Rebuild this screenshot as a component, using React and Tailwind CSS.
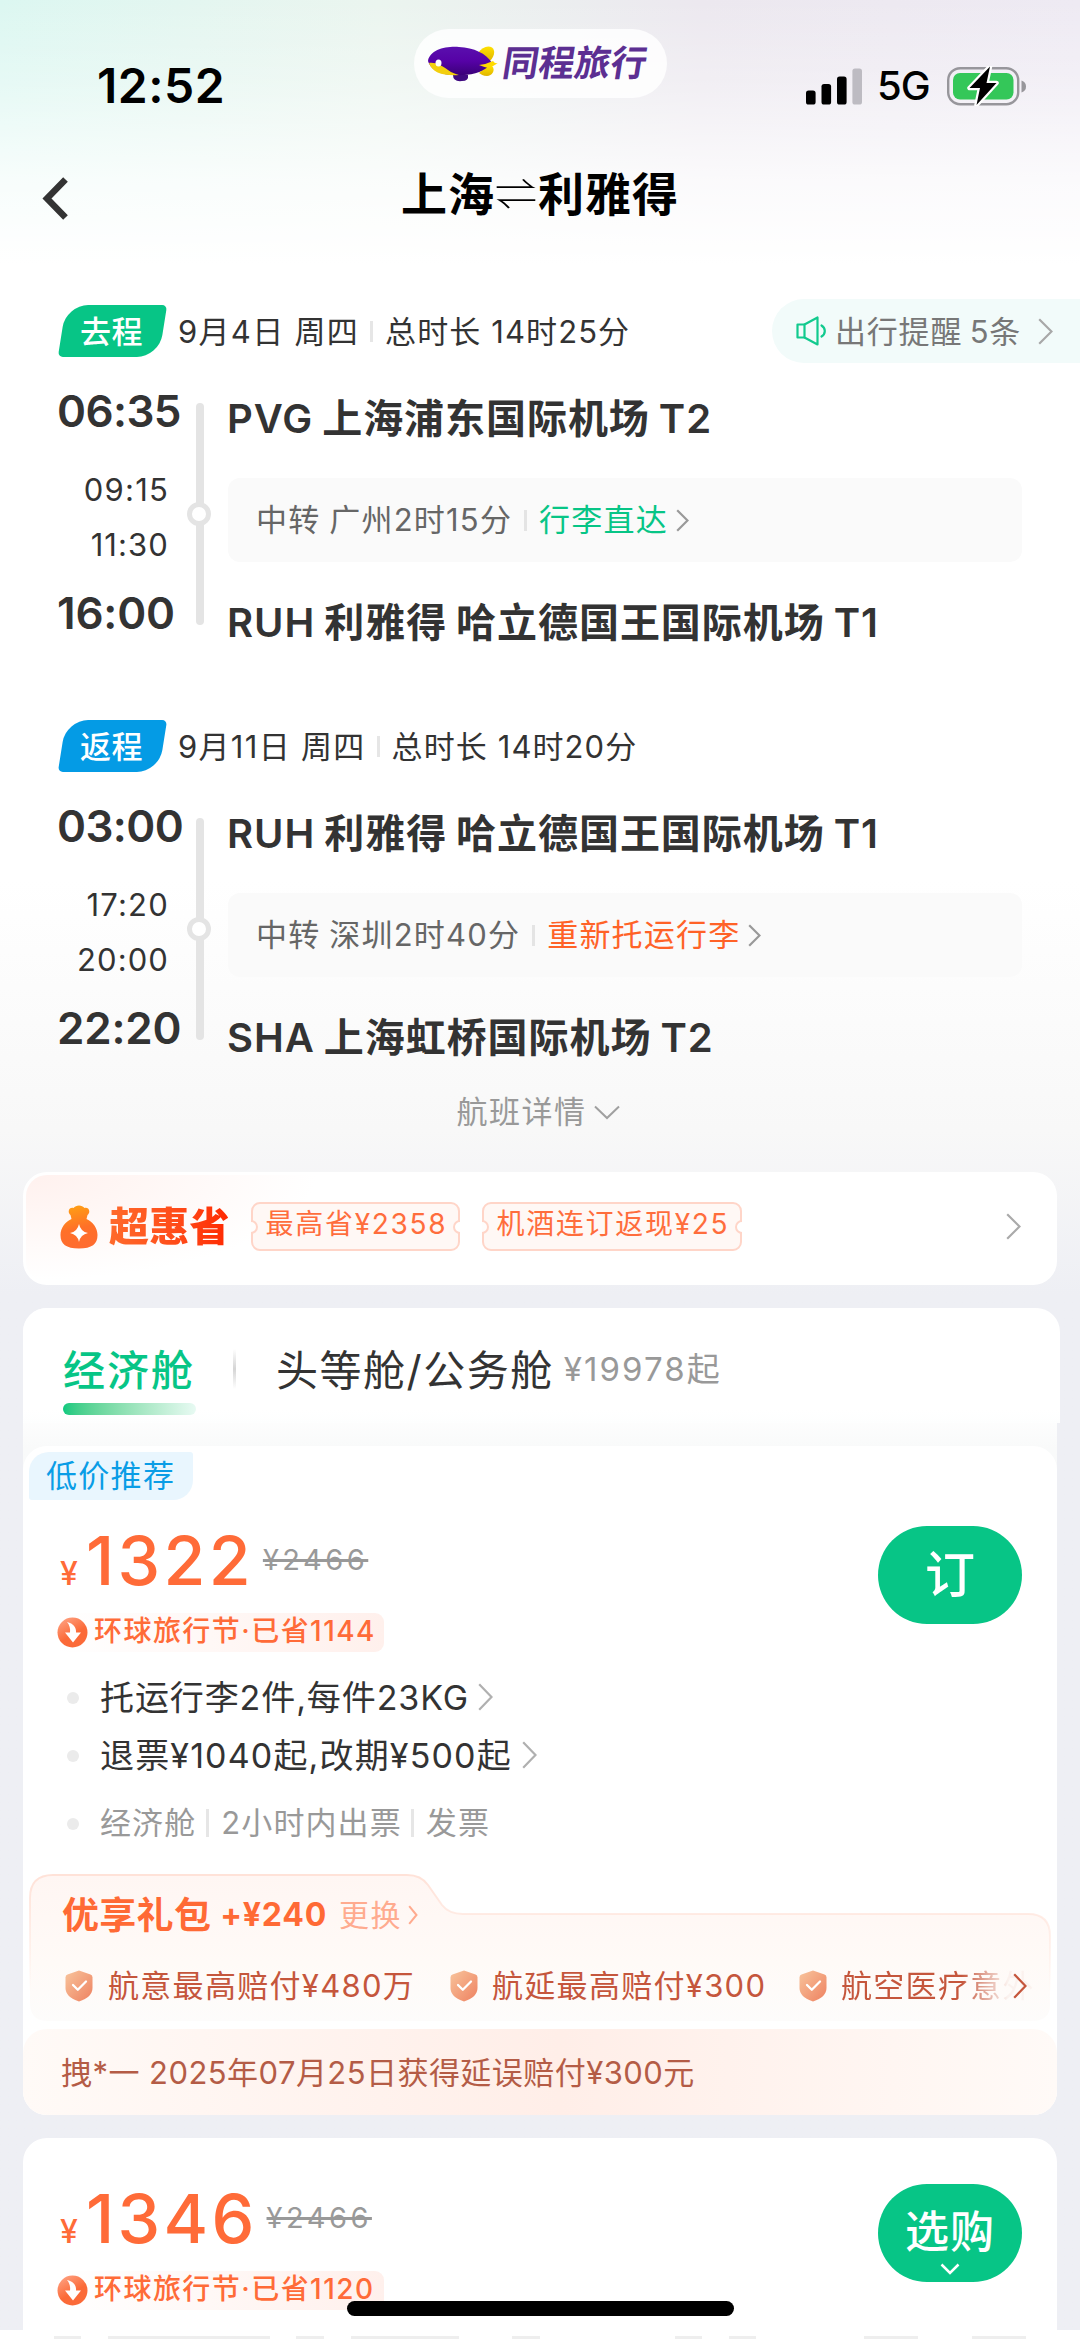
import React from "react";

const LEGS = [
  {
    tag: "去程",
    tagClass: "bg-[#07c586]",
    date: "9月4日 周四",
    total: "总时长 14时25分",
    times: ["06:35", "09:15", "11:30", "16:00"],
    from: "PVG 上海浦东国际机场 T2",
    to: "RUH 利雅得 哈立德国王国际机场 T1",
    stop: "中转 广州2时15分",
    baggage: "行李直达",
    baggageClass: "text-[#07c586]",
    reminder: "出行提醒 5条",
  },
  {
    tag: "返程",
    tagClass: "bg-[#049be5]",
    date: "9月11日 周四",
    total: "总时长 14时20分",
    times: ["03:00", "17:20", "20:00", "22:20"],
    from: "RUH 利雅得 哈立德国王国际机场 T1",
    to: "SHA 上海虹桥国际机场 T2",
    stop: "中转 深圳2时40分",
    baggage: "重新托运行李",
    baggageClass: "text-[#ff6227]",
  },
];

function Chevron({ className, strokeWidth = 2.2, w = 14, h = 26 }) {
  return (
    <svg width={w} height={h} viewBox={`0 0 ${w} ${h}`} fill="none" className={`shrink-0 ${className}`}>
      <path d={`M1.2 1.2 L${w - 1.5} ${h / 2} L1.2 ${h - 1.2}`} stroke="currentColor" strokeWidth={strokeWidth} />
    </svg>
  );
}

function Blimp() {
  return (
    <svg width="70" height="36" viewBox="0 0 70 36" className="shrink-0">
      <defs>
        <linearGradient id="hull" x1="0" y1="0" x2="0" y2="1">
          <stop offset="0" stopColor="#5a0fae" />
          <stop offset="0.5" stopColor="#5602a6" />
          <stop offset="1" stopColor="#3a0178" />
        </linearGradient>
        <linearGradient id="fin" x1="0" y1="0" x2="0" y2="1">
          <stop offset="0" stopColor="#ffe100" />
          <stop offset="1" stopColor="#e0b400" />
        </linearGradient>
      </defs>
      <path d="M50 7 C54 1 60 -1 64 1.5 C68 5 66 11 62 15 Z" fill="url(#fin)" />
      <path d="M51 27 C55 24 60 19 64 20 C68 24 64 30 59 30 C55 30 53 28 51 27 Z" fill="url(#fin)" />
      <path d="M25 29 Q32 26 40 29 Q41 35 34 35 Q25 36 25 29 Z" fill="#3f0a80" />
      <path d="M0 15 C2 4 17 0 31 1 C46 2 58 7 64 17 C57 25 47 29 34 29 C22 30 4 28 0 15 Z" fill="url(#hull)" />
      <path d="M1 17 C8 16 14 20 20 24 C24 27 28 28 31 29 C16 30 4 27 1 17 Z" fill="#f3cf0d" />
      <path d="M51 19 Q59 18 65 15 Q67 18 70 17 Q66 20 60 22 Q56 21 51 19 Z" fill="#ffd900" />
      <ellipse cx="10.5" cy="17" rx="3" ry="3.6" fill="#fff" />
    </svg>
  );
}

function StatusBar() {
  return (
    <div className="flex h-[150px] items-start pt-[29px]">
      <div className="mt-[27px] w-[317px] shrink-0 pl-[97px] text-[48px] leading-[60px] font-semibold tracking-[0.5px] text-black">
        12:52
      </div>
      <div className="ml-[97px] flex h-[69px] w-[253px] shrink-0 items-center rounded-full bg-white/85 pl-[14px]">
        <Blimp />
        <span className="ml-[5px] -skew-x-[9deg] text-[36px] leading-[69px] font-bold whitespace-nowrap text-[#5c2f92]">同程旅行</span>
      </div>
      <div className="mt-[27px] ml-[139px] flex h-[60px] items-center">
        <svg width="56" height="37" viewBox="0 0 56 37" className="shrink-0">
          <rect x="0" y="22.5" width="9.6" height="14" rx="2.6" />
          <rect x="15.5" y="16" width="9.6" height="20.5" rx="2.6" />
          <rect x="31" y="8.5" width="9.6" height="28" rx="2.6" />
          <rect x="46.4" y="0.5" width="9.6" height="36" rx="2.6" fill="#bdbbc2" />
        </svg>
        <span className="ml-[15px] w-[70px] text-[40px] leading-[60px] font-medium tracking-[-1px] text-black">5G</span>
        <svg width="80" height="40" viewBox="0 0 80 40" className="shrink-0">
          <rect x="1.2" y="2.2" width="70" height="36" rx="12" fill="none" stroke="#97969b" strokeWidth="2.4" />
          <rect x="6" y="7" width="60.5" height="26.5" rx="7" fill="#34c759" />
          <path d="M74.5 14.5 Q79 16 79 20.5 Q79 25 74.5 26.5 Z" fill="#97969b" />
          <path d="M43 0.5 L22.5 22 H33 L29.5 39 L49.5 17 H39.5 Z" fill="#000" stroke="#fff" strokeWidth="4.5" strokeLinejoin="round" paintOrder="stroke" />
        </svg>
      </div>
    </div>
  );
}

function TitleBar() {
  return (
    <div className="flex h-[149px] items-start">
      <svg width="28" height="44" viewBox="0 0 28 44" fill="none" className="mt-[26px] ml-[42px] shrink-0">
        <path d="M23.5 3.5 L5 22.5 L23.5 41.5" stroke="#333" strokeWidth="6.5" />
      </svg>
      <div className="ml-[331px] flex h-[87px] items-center text-[46px] leading-[88px] font-semibold tracking-[1px] text-black">
        <span>上海</span>
        <span className="w-[43px] scale-y-85 text-[42px] font-light tracking-normal">⇌</span>
        <span>利雅得</span>
      </div>
    </div>
  );
}

function Leg({ leg }) {
  const [depart, arriveStop, departStop, arrive] = leg.times;
  return (
    <section className="mb-[35px] h-[380px]">
      <div className="flex h-[64px] items-center pl-[62px] text-[31px] leading-[53px] tracking-[1.1px] text-[#333]">
        <div className={`flex h-[52px] w-[101px] -skew-x-[9deg] items-center justify-center rounded-tl-[22px] rounded-tr-[5px] rounded-br-[22px] rounded-bl-[5px] ${leg.tagClass}`}>
          <span className="skew-x-[9deg] pr-[2px] font-medium tracking-[0.5px] text-white">{leg.tag}</span>
        </div>
        <span className="ml-[15px] tracking-[1.3px]">{leg.date}</span>
        <i className="mr-[12px] ml-[11px] h-[21px] w-[3px] bg-[#e6e6e6]" />
        <span>{leg.total}</span>
        {leg.reminder && (
          <div className="ml-auto flex h-[64px] w-[308px] items-center rounded-l-full bg-[#f2fbfa] pl-[24px] tracking-[0.8px] [word-spacing:-2px] text-[#777]">
            <svg width="30" height="30" viewBox="0 0 30 30" fill="none" stroke="#12ca8e" strokeWidth="2.2" strokeLinejoin="round" strokeLinecap="round" className="shrink-0">
              <path d="M8.5 8.5 L21.5 1.5 V28.5 L8.5 21.5 Z" />
              <path d="M8.5 8.5 H1.5 V21.5 H8.5" />
              <path d="M25.5 9.5 Q28.8 11.5 28.8 15 Q28.8 18.5 25.5 20.5" />
            </svg>
            <span className="ml-[9px] whitespace-nowrap">{leg.reminder}</span>
            <Chevron className="ml-[17px] text-[#a8a8a8]" w={15} h={27} />
          </div>
        )}
      </div>
      <div className="flex h-[316px] items-start text-[#333]">
        <div className="flex w-[187px] shrink-0 flex-col pl-[57px]">
          <span className="mt-[24px] text-[44px] leading-[48px] font-semibold tracking-[-0.6px]">{depart}</span>
          <span className="mt-[37px] pr-[18px] text-right text-[31px] leading-[36px] tracking-[1.2px]">{arriveStop}</span>
          <span className="mt-[19px] pr-[18px] text-right text-[31px] leading-[36px] tracking-[1.1px]">{departStop}</span>
          <span className="mt-[26px] text-[44px] leading-[49px] font-semibold tracking-[-0.2px]">{arrive}</span>
        </div>
        <div className="relative mt-[40px] flex h-[222px] w-[24px] shrink-0 justify-center">
          <i className="ml-px h-full w-[8px] rounded-full bg-[#e4e4e4]" />
          <i className="absolute top-[99px] left-0 size-[24px] rounded-full border-[5px] border-[#e4e4e4] bg-white" />
        </div>
        <div className="ml-[16px] text-[40px] leading-[50px] font-semibold tracking-[0.95px] whitespace-nowrap [word-spacing:-2px]">
          <div className="mt-[31px]">{leg.from}</div>
          <div className="mt-[34px] ml-px flex h-[84px] w-[794px] items-center rounded-[12px] bg-[#fafafa] pl-[28px] text-[31px] font-normal tracking-[1.2px] text-[#666] [word-spacing:-1px]">
            <span>{leg.stop}</span>
            <i className="mx-[12px] h-[21px] w-[3px] bg-[#e4e4e4]" />
            <span className={`tracking-[1.2px] ${leg.baggageClass}`}>{leg.baggage}</span>
            <Chevron className="ml-[8px] text-[#999]" w={13} h={23} />
          </div>
          <div className="mt-[36px]">{leg.to}</div>
        </div>
      </div>
    </section>
  );
}

function Ticket({ children, className }) {
  return (
    <div className={`relative flex h-[49px] items-start justify-center rounded-[9px] border-2 border-[#ffd5c8] bg-[#fff8f5] text-[28px] leading-[41px] tracking-[1.7px] whitespace-nowrap text-[#ff6d3c] ${className}`}>
      <i className="absolute top-[16px] -left-[9px] size-[14px] rounded-full border-2 border-[#ffd5c8] bg-[#fffdfc] [clip-path:inset(0_0_0_7px)]" />
      <span className="pl-[2px]">{children}</span>
      <i className="absolute top-[16px] -right-[9px] size-[14px] rounded-full border-2 border-[#ffd5c8] bg-white [clip-path:inset(0_7px_0_0)]" />
    </div>
  );
}

function SavingsBar() {
  return (
    <div className="mt-[42px] ml-[23px] h-[113px] w-[1034px] rounded-[24px] bg-white p-[3px]">
      <div className="flex h-full items-start rounded-[21px] bg-[radial-gradient(ellipse_290px_105px_at_0_0,#fff1ee,#ffffff)] pt-[27px] pl-[34px]">
        <div className="flex h-[49px] w-full items-center">
          <svg width="38" height="44" viewBox="0 0 38 44" className="shrink-0">
            <defs>
              <linearGradient id="bag" x1="0.3" y1="0" x2="0.5" y2="1">
                <stop offset="0" stopColor="#ffa014" />
                <stop offset="0.55" stopColor="#ff7028" />
                <stop offset="1" stopColor="#ff6c30" />
              </linearGradient>
            </defs>
            <path d="M10.5 10 C7 7 9 2 13.5 3 C16 -0.5 22 -0.5 24.5 3 C29 2 31 7 27.5 10 L26.5 14 C33 17 37.5 23 37.5 30 C37.5 39 32 43.5 19 43.5 C6 43.5 0.5 39 0.5 30 C0.5 23 5 17 11.5 14 Z" fill="url(#bag)" />
            <path d="M19 19 Q20.5 26.5 28 28 Q20.5 29.5 19 37 Q17.5 29.5 10 28 Q17.5 26.5 19 19 Z" fill="#fff" />
          </svg>
          <span className="ml-[11px] bg-linear-to-r from-[#ff6a2b] to-[#ff2600] bg-clip-text text-[40px] leading-[49px] font-black tracking-[0.3px] text-transparent">超惠省</span>
          <Ticket className="ml-[21px] w-[209px]">最高省¥2358</Ticket>
          <Ticket className="ml-[22px] w-[260px]">机酒连订返现¥25</Ticket>
          <Chevron className="mr-[33px] ml-auto text-[#aaa]" w={15} h={27} />
        </div>
      </div>
    </div>
  );
}

function CabinTabs() {
  return (
    <div className="flex h-[115px] w-[1037px] items-start rounded-t-[24px] bg-linear-to-b from-white from-88% to-[#fdfefe] pl-[40px]">
      <div className="w-[133px]">
        <div className="mt-[38px] text-[42px] leading-[50px] font-medium tracking-[2px] whitespace-nowrap text-[#07c586]">经济舱</div>
        <div className="mt-[7px] h-[12px] rounded-full bg-linear-to-r from-[#07c97f] to-[#e8faf3]" />
      </div>
      <i className="mt-[41px] ml-[37px] h-[40px] w-[3px] bg-linear-to-b from-white via-[#d5d5d5] to-white" />
      <div className="mt-[38px] ml-[40px] text-[42px] leading-[50px] tracking-[1.5px] text-[#333]">头等舱/公务舱</div>
      <div className="mt-[36px] ml-[10px] text-[33px] leading-[50px] tracking-[2.1px] text-[#999]">¥19978起</div>
    </div>
  );
}

function PriceHead({ price, original, saved, id, children }) {
  return (
    <div className="flex items-start justify-between pr-[35px] pl-[34px]">
      <div>
        <div className="flex h-[70px] items-center">
          <div className="flex items-baseline font-medium text-[#ff6b38]">
            <span className="w-[29px] pl-[3px] text-[32px] leading-none">¥</span>
            <span className="text-[68px] leading-[69px] tracking-[3.3px]">{price}</span>
          </div>
          <span className="ml-[9px] text-[29px] leading-[70px] tracking-[3.5px] text-[#999] line-through decoration-[#999] decoration-[2.5px]">{original}</span>
        </div>
        <div className="mt-[18px] flex h-[39px] w-[327px] items-center rounded-r-[9px] bg-linear-to-r from-white to-[#fff0ec]">
          <svg width="31" height="31" viewBox="0 0 31 31" className="shrink-0">
            <defs>
              <linearGradient id={id} x1="0" y1="0" x2="0.6" y2="1">
                <stop offset="0" stopColor="#ffa98c" />
                <stop offset="0.65" stopColor="#fb6a38" />
                <stop offset="1" stopColor="#fb6a38" />
              </linearGradient>
            </defs>
            <circle cx="15.5" cy="15.5" r="15" fill={`url(#${id})`} />
            <path d="M10 5 C16.5 6.5 19.5 10.5 19 15.5 H24 L16 25.5 L8 15.5 H13 C13.5 11.5 12.5 8 10 5 Z" fill="#fff" />
          </svg>
          <span className="ml-[6px] h-[39px] text-[28px] leading-[37px] font-medium tracking-[1.45px] whitespace-nowrap text-[#ff6b38]">
            环球旅行节·已省{saved}
          </span>
        </div>
      </div>
      <div className="mt-[1px] flex h-[98px] w-[144px] flex-col items-center rounded-full bg-[#07c586] text-white">
        {children}
      </div>
    </div>
  );
}

function Dot() {
  return <i className="mt-px size-[12px] shrink-0 rounded-full bg-[#ebebeb]" />;
}

function Shield({ id }) {
  return (
    <svg width="28" height="32" viewBox="0 0 28 32" fill="none" className="shrink-0">
      <defs>
        <linearGradient id={id} x1="0" y1="0" x2="1" y2="1">
          <stop offset="0" stopColor="#f8c49c" />
          <stop offset="1" stopColor="#ee8160" />
        </linearGradient>
      </defs>
      <path d="M14 0.5 L25.5 4.5 Q27.5 5.2 27.5 7.5 V18 Q27.5 27 14 31.5 Q0.5 27 0.5 18 V7.5 Q0.5 5.2 2.5 4.5 Z" fill={`url(#${id})`} />
      <path d="M8 15 L12.8 19.8 L21 11.5" stroke="#fff" strokeWidth="2.3" strokeLinecap="round" strokeLinejoin="round" />
    </svg>
  );
}

function GiftPack() {
  return (
    <div className="relative ml-[6px] h-[148px] w-[1022px]">
      <svg width="1022" height="148" viewBox="0 0 1022 148" fill="none" className="absolute inset-0">
        <defs>
          <linearGradient id="gift" x1="0" y1="0" x2="0" y2="1">
            <stop offset="0" stopColor="#fff6f3" />
            <stop offset="0.6" stopColor="#fffaf7" />
            <stop offset="1" stopColor="#fdfcfb" />
          </linearGradient>
          <linearGradient id="giftLine" x1="0" y1="0" x2="0" y2="1">
            <stop offset="0" stopColor="#ffe2d8" />
            <stop offset="0.8" stopColor="#ffe2d8" stopOpacity="0" />
          </linearGradient>
        </defs>
        <path
          d="M1 24 Q1 1 24 1 H378 Q392 1 399 11 L413 31 Q420 40 434 40 H999 Q1021 40 1021 62 V131 Q1021 147 1003 147 H19 Q1 147 1 129 Z"
          fill="url(#gift)"
          stroke="url(#giftLine)"
          strokeWidth="2"
        />
      </svg>
      <div className="relative flex h-[82px] items-center pl-[33px] whitespace-nowrap text-[#ff6a35]">
        <span className="text-[37px] leading-[83px] font-bold tracking-[0.3px]">优享礼包</span>
        <span className="ml-[9px] text-[32px] leading-[82px] font-bold tracking-[0.8px]">+¥240</span>
        <span className="ml-[12px] text-[30px] leading-[80px] tracking-[1.5px] text-[#ffab8f]">更换</span>
        <Chevron className="ml-[6px] text-[#ffab8f]" w={10} h={20} strokeWidth={2} />
      </div>
      <div className="relative flex h-[60px] items-center pl-[36px] text-[31px] leading-[60px] tracking-[1.3px] whitespace-nowrap text-[#c5563c]">
        <Shield id="s1" />
        <span className="ml-[15px] w-[342px] shrink-0">航意最高赔付¥480万</span>
        <Shield id="s2" />
        <span className="ml-[14px] w-[307px] shrink-0">航延最高赔付¥300</span>
        <Shield id="s3" />
        <span className="ml-[14px] shrink-0 bg-linear-to-r from-[#c5563c] from-62% to-[#c5563c]/5 to-86% bg-clip-text text-transparent">
          航空医疗意外
        </span>
        <Chevron className="-ml-[22px]" w={14} h={26} />
      </div>
    </div>
  );
}

function HomeIndicator() {
  return <div className="absolute bottom-[23px] left-[347px] h-[15px] w-[387px] rounded-full bg-black" />;
}

const SKELETON = ["ml-[54px] w-[27px]", "ml-[27px] w-[162px]", "ml-[26px] w-[28px]", "ml-[27px] w-[108px]", "ml-[53px] w-[28px]", "ml-[135px] w-[27px]", "ml-[27px] w-[27px]", "ml-[108px] w-[54px]", "ml-[54px] w-[54px]"];

export default function App() {
  return (
    <main className="relative h-[2339px] w-[1080px] overflow-hidden bg-linear-to-b from-white from-[880px] via-[#f8f8f8] via-[1130px] to-[#eeeff4] to-[1295px] font-[Inter,'Noto_Sans_CJK_SC',sans-serif]">
      <header className="h-[299px] bg-[linear-gradient(to_bottom,rgba(255,255,255,0)_0,rgba(255,255,255,0.28)_80px,rgba(255,255,255,0.78)_180px,#fff_265px),linear-gradient(to_right,#dcf7f1,#ebf5ef_35%,#ece8ef_65%,#eeeaf3)]">
        <StatusBar />
        <TitleBar />
      </header>

      {LEGS.map((leg) => (
        <Leg key={leg.tag} leg={leg} />
      ))}

      <div className="-mt-[35px] flex h-[36px] items-center justify-center pr-[4px] text-[31px] leading-[36px] tracking-[1.5px] text-[#999]">
        航班详情
        <svg width="26" height="15" viewBox="0 0 26 15" fill="none" className="ml-[7px]">
          <path d="M1 1.5 L13 13 L25 1.5" stroke="#a0a0a0" strokeWidth="2" />
        </svg>
      </div>

      <SavingsBar />

      <div className="mt-[23px] ml-[23px] h-[807px] w-[1034px] rounded-t-[24px] rounded-b-[24px] bg-linear-to-b from-white from-[100px] to-[#f9fafa] to-[140px]">
        <CabinTabs />
        <div className="mt-[23px] h-[669px] rounded-[24px] bg-white pt-[6px]">
          <div className="ml-[6px] h-[48px] w-[164px] rounded-tl-[20px] rounded-tr-[3px] rounded-br-[20px] rounded-bl-[3px] bg-[#e9f6fe] pl-[17px] text-[31px] leading-[48px] tracking-[1.3px] text-[#0a9de6]">
            低价推荐
          </div>
          <div className="mt-[25px]">
            <PriceHead price="1322" original="¥2466" saved="1144" id="promo1">
              <span className="text-[50px] leading-[99px] font-medium">订</span>
            </PriceHead>
          </div>
          <ul className="mt-[16px] pl-[44px] text-[34px] tracking-[0.9px] text-[#333]">
            <li className="flex h-[58px] items-center">
              <Dot />
              <span className="ml-[21px]">托运行李2件,每件23KG</span>
              <Chevron className="ml-[9px] text-[#b0b0b0]" w={15} h={28} />
            </li>
            <li className="flex h-[58px] items-center tracking-[1.15px]">
              <Dot />
              <span className="ml-[21px]">退票¥1040起,改期¥500起</span>
              <Chevron className="ml-[10px] text-[#b0b0b0]" w={15} h={28} />
            </li>
            <li className="flex h-[78px] items-center text-[31px] tracking-[1.1px] text-[#999]">
              <Dot />
              <span className="ml-[21px]">经济舱</span>
              <i className="mr-[12px] ml-[10px] h-[28px] w-[3px] bg-[#e6e6e6]" />
              <span>2小时内出票</span>
              <i className="mr-[12px] ml-[9px] h-[28px] w-[3px] bg-[#e6e6e6]" />
              <span>发票</span>
            </li>
          </ul>
          <div className="mt-[12px]">
            <GiftPack />
          </div>
          <div className="mt-[7px] h-[86px] rounded-[24px] bg-linear-to-r from-[#fffaf7] via-[#ffeee8] via-52% to-[#fffaf7] pl-[38px] text-[31px] leading-[87px] tracking-[0.45px] whitespace-nowrap text-[#b45c46]">
            拽*一 2025年07月25日获得延误赔付¥300元
          </div>
        </div>
      </div>

      <div className="mt-[23px] ml-[23px] h-[192px] w-[1034px] rounded-t-[24px] bg-white pt-[45px]">
        <PriceHead price="1346" original="¥2466" saved="1120" id="promo2">
          <span className="mt-[18px] text-[44px] leading-[61px] font-medium tracking-[1px]">选购</span>
          <svg width="20" height="12" viewBox="0 0 20 12" fill="none">
            <path d="M1.5 1.5 L10 10 L18.5 1.5" stroke="#fff" strokeWidth="2.5" />
          </svg>
        </PriceHead>
      </div>
      <div className="flex h-[9px] items-end bg-white">
        {SKELETON.map((c, n) => (
          <i key={n} className={`h-[3px] bg-[#eee] ${c}`} />
        ))}
      </div>
      <HomeIndicator />
    </main>
  );
}
